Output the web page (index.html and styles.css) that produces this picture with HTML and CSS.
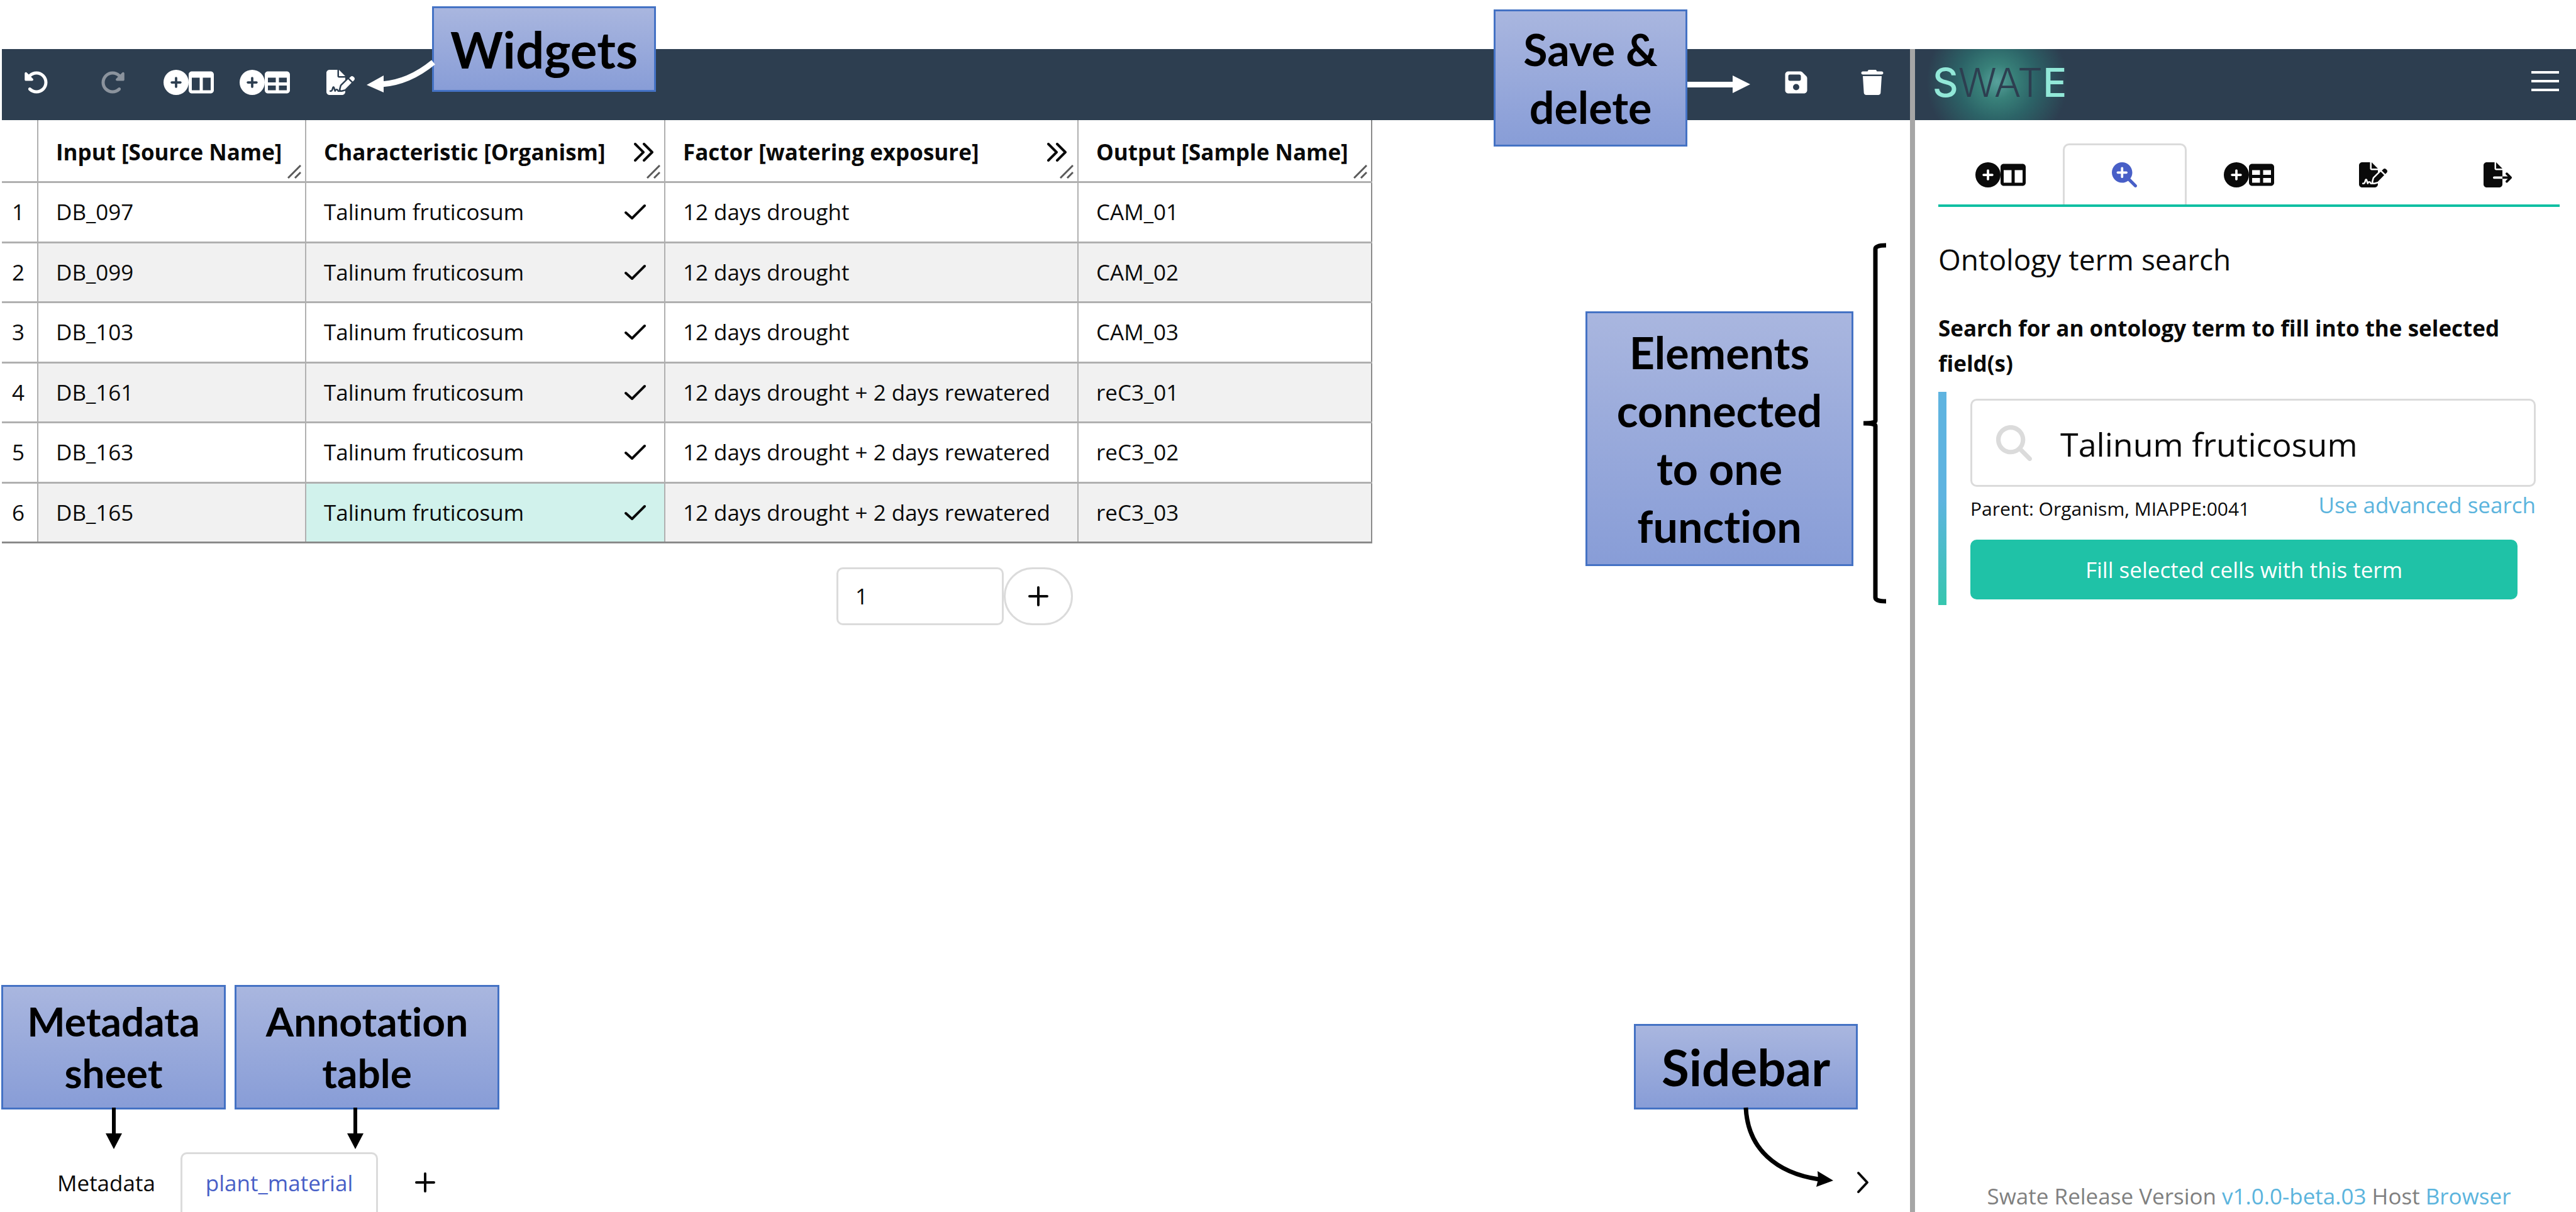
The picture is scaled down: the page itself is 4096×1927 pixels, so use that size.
FILE: index.html
```html
<!DOCTYPE html>
<html lang="en">
<head>
<meta charset="utf-8">
<title>Swate</title>
<link rel="stylesheet" href="styles.css">
</head>
<body>
<svg class="sprite" aria-hidden="true">
  <symbol id="i-undo" viewBox="0 0 512 512"><path d="M48.5 224H40c-13.3 0-24-10.7-24-24V72c0-9.7 5.8-18.5 14.8-22.2s19.3-1.7 26.2 5.2L98.6 96.6c87.6-86.5 228.7-86.2 315.8 1c87.5 87.5 87.5 229.3 0 316.8s-229.3 87.5-316.8 0c-12.5-12.5-12.5-32.8 0-45.3s32.8-12.5 45.3 0c62.5 62.5 163.8 62.5 226.3 0s62.5-163.8 0-226.3c-62.2-62.2-162.7-62.5-225.3-1L185 183c6.9 6.9 8.9 17.2 5.2 26.2s-12.5 14.8-22.2 14.8H48.5z"/></symbol>
  <symbol id="i-circle-plus" viewBox="0 0 512 512"><path d="M256 512A256 256 0 1 0 256 0a256 256 0 1 0 0 512zM232 344V280H168c-13.3 0-24-10.7-24-24s10.7-24 24-24h64V168c0-13.3 10.7-24 24-24s24 10.7 24 24v64h64c13.3 0 24 10.7 24 24s-10.7 24-24 24H280v64c0 13.3-10.7 24-24 24s-24-10.7-24-24z"/></symbol>
  <symbol id="i-columns" viewBox="0 0 512 512"><path d="M0 96C0 60.7 28.7 32 64 32H448c35.3 0 64 28.7 64 64V416c0 35.3-28.7 64-64 64H64c-35.3 0-64-28.7-64-64V96zm64 64V416H224V160H64zm384 0H288V416H448V160z"/></symbol>
  <symbol id="i-table" viewBox="0 0 512 512"><path d="M64 256V160H224v96H64zm0 64H224v96H64V320zm224 96V320H448v96H288zM448 256H288V160H448v96zM64 32C28.7 32 0 60.7 0 96V416c0 35.3 28.7 64 64 64H448c35.3 0 64-28.7 64-64V96c0-35.3-28.7-64-64-64H64z"/></symbol>
  <symbol id="i-sign" viewBox="0 0 576 512"><path d="M64 0C28.7 0 0 28.7 0 64V448c0 35.3 28.7 64 64 64H320c35.3 0 64-28.7 64-64V428.7c-2.7 1.1-5.4 2-8.2 2.7l-60.1 15c-3 .7-6 1.2-9 1.4c-.9 .1-1.8 .2-2.7 .2H240c-6.1 0-11.6-3.4-14.3-8.8l-8.8-17.7c-1.7-3.4-5.1-5.5-8.8-5.5s-7.2 2.1-8.8 5.5l-8.8 17.7c-2.9 5.9-9.2 9.4-15.7 8.8s-12.1-5.1-13.9-11.3L144 381l-9.8 32.8c-6.1 20.3-24.8 34.2-46 34.2H80c-8.8 0-16-7.2-16-16s7.2-16 16-16h8.2c7.1 0 13.3-4.6 15.3-11.4l14.9-49.5c3.4-11.3 13.8-19.1 25.6-19.1s22.2 7.7 25.6 19.1l11.6 38.6c7.4-6.2 16.8-9.7 26.8-9.7c15.9 0 30.4 9 37.5 23.2l4.4 8.8h8.9c-3.1-8.8-3.7-18.4-1.4-27.8l15-60.1c2.8-11.3 8.6-21.5 16.8-29.7L384 203.6V160H256c-17.7 0-32-14.3-32-32V0H64zM256 0V128H384L256 0zM549.8 139.7c-15.6-15.6-40.9-15.6-56.6 0l-29.4 29.4 71 71 29.4-29.4c15.6-15.6 15.6-40.9 0-56.6l-14.4-14.4zM311.9 321c-4.1 4.1-7 9.2-8.4 14.9l-15 60.1c-1.4 5.5 .2 11.2 4.2 15.2s9.7 5.6 15.2 4.2l60.1-15c5.6-1.4 10.8-4.3 14.9-8.4L512.1 262.7l-71-71L311.9 321z"/></symbol>
  <symbol id="i-export" viewBox="0 0 576 512"><path d="M0 64C0 28.7 28.7 0 64 0H224V128c0 17.7 14.3 32 32 32H384V288H216c-13.3 0-24 10.7-24 24s10.7 24 24 24H384V448c0 35.3-28.7 64-64 64H64c-35.3 0-64-28.7-64-64V64zM384 336V288H494.1l-39-39c-9.4-9.4-9.4-24.6 0-33.9s24.6-9.4 33.9 0l80 80c9.4 9.4 9.4 24.6 0 33.9l-80 80c-9.4 9.4-24.6 9.4-33.9 0s-9.4-24.6 0-33.9l39-39H384zm0-208H256V0L384 128z"/></symbol>
  <symbol id="i-zoom" viewBox="0 0 512 512"><path d="M416 208c0 45.9-14.9 88.3-40 122.7L502.6 457.4c12.5 12.5 12.5 32.8 0 45.3s-32.8 12.5-45.3 0L330.7 376c-34.4 25.2-76.8 40-122.7 40C93.1 416 0 322.9 0 208S93.1 0 208 0S416 93.1 416 208zM184 296c0 13.3 10.7 24 24 24s24-10.7 24-24V232h64c13.3 0 24-10.7 24-24s-10.7-24-24-24H232V120c0-13.3-10.7-24-24-24s-24 10.7-24 24v64H120c-13.3 0-24 10.7-24 24s10.7 24 24 24h64v64z"/></symbol>
  <symbol id="i-search" viewBox="0 0 512 512"><path d="M416 208c0 45.9-14.9 88.3-40 122.7L502.6 457.4c12.5 12.5 12.5 32.8 0 45.3s-32.8 12.5-45.3 0L330.7 376c-34.4 25.2-76.8 40-122.7 40C93.1 416 0 322.9 0 208S93.1 0 208 0S416 93.1 416 208zM208 352a144 144 0 1 0 0-288 144 144 0 1 0 0 288z"/></symbol>
  <symbol id="i-save" viewBox="0 0 448 512"><path d="M64 32C28.7 32 0 60.7 0 96V416c0 35.3 28.7 64 64 64H384c35.3 0 64-28.7 64-64V173.3c0-17-6.7-33.3-18.7-45.3L352 50.7C340 38.7 323.7 32 306.7 32H64zm0 96c0-17.7 14.3-32 32-32H288c17.7 0 32 14.3 32 32v64c0 17.7-14.3 32-32 32H96c-17.7 0-32-14.3-32-32V128zM224 288a64 64 0 1 1 0 128 64 64 0 1 1 0-128z"/></symbol>
  <symbol id="i-trash" viewBox="0 0 448 512"><path d="M135.2 17.7L128 32H32C14.3 32 0 46.3 0 64S14.3 96 32 96H416c17.7 0 32-14.3 32-32s-14.3-32-32-32H320l-7.2-14.3C307.4 6.8 296.3 0 284.2 0H163.8c-12.1 0-23.2 6.8-28.6 17.7zM416 128H32L53.2 467c1.6 25.3 22.6 45 47.9 45H346.9c25.3 0 46.3-19.7 47.9-45L416 128z"/></symbol>
  <symbol id="i-plus" viewBox="0 0 32 32"><path d="M16 2v28M2 16h28" fill="none" stroke="currentColor" stroke-width="4" stroke-linecap="round"/></symbol>
  <symbol id="i-check" viewBox="0 0 34 26"><path d="M2 14l10 9L32 3" fill="none" stroke="currentColor" stroke-width="4" stroke-linecap="round" stroke-linejoin="round"/></symbol>
  <symbol id="i-more" viewBox="0 0 32 30"><path d="M2 2l13 13L2 28M16 2l13 13L16 28" fill="none" stroke="currentColor" stroke-width="4" stroke-linecap="round" stroke-linejoin="round"/></symbol>
  <symbol id="i-chevron" viewBox="0 0 20 36"><path d="M3 3l14 15L3 33" fill="none" stroke="currentColor" stroke-width="4" stroke-linecap="round" stroke-linejoin="round"/></symbol>
  <symbol id="i-grip" viewBox="0 0 22 22"><path d="M1 21L21 1M12 21l9-9" fill="none" stroke="#5a5a5a" stroke-width="3"/></symbol>
</svg>

<div class="app">
  <main class="workspace">
    <header class="bar toolbar">
      <button class="tool" aria-label="Undo"><svg class="icon"><use href="#i-undo"/></svg></button>
      <button class="tool" aria-label="Redo" disabled><svg class="icon flip"><use href="#i-undo"/></svg></button>
      <button class="tool" aria-label="Add building block"><svg class="icon"><use href="#i-circle-plus"/></svg><svg class="icon"><use href="#i-columns"/></svg></button>
      <button class="tool" aria-label="Add template"><svg class="icon"><use href="#i-circle-plus"/></svg><svg class="icon"><use href="#i-table"/></svg></button>
      <button class="tool" aria-label="File picker"><svg class="icon wide"><use href="#i-sign"/></svg></button>
      <span class="spacer"></span>
      <button class="tool" aria-label="Save"><svg class="icon"><use href="#i-save"/></svg></button>
      <button class="tool" aria-label="Delete"><svg class="icon"><use href="#i-trash"/></svg></button>
    </header>

    <table class="sheet">
      <colgroup><col class="c-num"><col class="c-in"><col class="c-char"><col class="c-factor"><col class="c-out"></colgroup>
      <thead>
        <tr>
          <th></th>
          <th><div class="cell">Input [Source Name]</div><svg class="grip"><use href="#i-grip"/></svg></th>
          <th><div class="cell">Characteristic [Organism]<svg class="more"><use href="#i-more"/></svg></div><svg class="grip"><use href="#i-grip"/></svg></th>
          <th><div class="cell">Factor [watering exposure]<svg class="more"><use href="#i-more"/></svg></div><svg class="grip"><use href="#i-grip"/></svg></th>
          <th><div class="cell">Output [Sample Name]</div><svg class="grip"><use href="#i-grip"/></svg></th>
        </tr>
      </thead>
      <tbody>
        <tr><th>1</th><td>DB_097</td><td><div class="cell">Talinum fruticosum<svg class="check"><use href="#i-check"/></svg></div></td><td>12 days drought</td><td>CAM_01</td></tr>
        <tr><th>2</th><td>DB_099</td><td><div class="cell">Talinum fruticosum<svg class="check"><use href="#i-check"/></svg></div></td><td>12 days drought</td><td>CAM_02</td></tr>
        <tr><th>3</th><td>DB_103</td><td><div class="cell">Talinum fruticosum<svg class="check"><use href="#i-check"/></svg></div></td><td>12 days drought</td><td>CAM_03</td></tr>
        <tr><th>4</th><td>DB_161</td><td><div class="cell">Talinum fruticosum<svg class="check"><use href="#i-check"/></svg></div></td><td>12 days drought + 2 days rewatered</td><td>reC3_01</td></tr>
        <tr><th>5</th><td>DB_163</td><td><div class="cell">Talinum fruticosum<svg class="check"><use href="#i-check"/></svg></div></td><td>12 days drought + 2 days rewatered</td><td>reC3_02</td></tr>
        <tr><th>6</th><td>DB_165</td><td class="selected"><div class="cell">Talinum fruticosum<svg class="check"><use href="#i-check"/></svg></div></td><td>12 days drought + 2 days rewatered</td><td>reC3_03</td></tr>
      </tbody>
    </table>

    <div class="add-rows">
      <input class="count" type="text" inputmode="numeric" value="1" aria-label="Number of rows">
      <button class="add" aria-label="Add rows"><svg class="plus"><use href="#i-plus"/></svg></button>
    </div>

    <footer class="sheet-tabs">
      <button class="sheet-tab">Metadata</button>
      <button class="sheet-tab active">plant_material</button>
      <button class="new-tab" aria-label="New table"><svg class="plus"><use href="#i-plus"/></svg></button>
      <span class="spacer"></span>
      <button class="toggle" aria-label="Toggle sidebar"><svg class="chevron"><use href="#i-chevron"/></svg></button>
    </footer>
  </main>

  <div class="divider"></div>

  <aside class="sidebar">
    <header class="bar">
      <div class="logo"><b>S</b>WAT<b>E</b></div>
      <span class="spacer"></span>
      <button class="burger" aria-label="Menu"><i></i><i></i><i></i></button>
    </header>
    <div class="side-body">
      <nav class="side-tabs">
        <button class="side-tab" aria-label="Building blocks"><svg class="icon"><use href="#i-circle-plus"/></svg><svg class="icon"><use href="#i-columns"/></svg></button>
        <button class="side-tab active" aria-label="Term search"><svg class="icon"><use href="#i-zoom"/></svg></button>
        <button class="side-tab" aria-label="Templates"><svg class="icon"><use href="#i-circle-plus"/></svg><svg class="icon"><use href="#i-table"/></svg></button>
        <button class="side-tab" aria-label="File picker"><svg class="icon wide"><use href="#i-sign"/></svg></button>
        <button class="side-tab" aria-label="Export"><svg class="icon wide"><use href="#i-export"/></svg></button>
      </nav>
      <h1 class="title">Ontology term search</h1>
      <label class="subtitle" for="term">Search for an ontology term to fill into the selected field(s)</label>
      <section class="panel">
        <div class="search">
          <svg class="search-icon"><use href="#i-search"/></svg>
          <input id="term" class="search-input" type="text" value="Talinum fruticosum">
        </div>
        <div class="hints">
          <span class="parent">Parent: Organism, MIAPPE:0041</span>
          <a class="link" href="#">Use advanced search</a>
        </div>
        <button class="fill">Fill selected cells with this term</button>
      </section>
      <p class="version">Swate Release Version <a class="link" href="#">v1.0.0-beta.03</a> Host <a class="link" href="#">Browser</a></p>
    </div>
  </aside>
</div>

<div class="note note-widgets">Widgets
  <svg class="arrow" width="110" height="50" viewBox="0 0 110 50"><path d="M24 32Q67 29 106 -3" fill="none" stroke="#fff" stroke-width="9"/><path d="M0 33L27 18V45Z" fill="#fff"/></svg>
</div>
<div class="note note-save">Save &amp;<br>delete
  <svg class="arrow" width="100" height="28" viewBox="0 0 100 28"><path d="M0 10H72V0L100 14L72 28V19H0Z" fill="#fff"/></svg>
</div>
<div class="note note-elements">Elements<br>connected<br>to one<br>function
  <svg class="arrow" width="40" height="574" viewBox="0 0 40 574"><path d="M37 4Q20 4 20 10V283Q20 287 1 287Q20 287 20 291V564Q20 570 37 570" fill="none" stroke="#000" stroke-width="7"/></svg>
</div>
<div class="note note-metadata">Metadata<br>sheet
  <svg class="arrow" width="26" height="66" viewBox="0 0 26 66"><path d="M10 0H16V41H26L13 66L0 41H10Z"/></svg>
</div>
<div class="note note-annotation">Annotation<br>table
  <svg class="arrow" width="26" height="66" viewBox="0 0 26 66"><path d="M10 0H16V41H26L13 66L0 41H10Z"/></svg>
</div>
<div class="note note-sidebar">Sidebar
  <svg class="arrow" width="150" height="130" viewBox="0 0 150 130"><path d="M7 0C10 66 56 104 123 114" fill="none" stroke="#000" stroke-width="7"/><path d="M121 101L146 116L119 126L122 114Z"/></svg>
</div>
</body>
</html>
```
FILE: styles.css
```css
* { box-sizing: border-box; }

body {
  margin: 0;
  position: relative;
  min-height: 100vh;
  background: #fff;
  color: #0a0a0a;
  font: 35px/50px "Open Sans", "Noto Sans", sans-serif;
}

button, input {
  font: inherit;
  color: inherit;
  background: none;
  border: 0;
  margin: 0;
  padding: 0;
}

.sprite { position: absolute; width: 0; height: 0; }
.spacer { flex: 1; }
.link { color: #5bb4dd; text-decoration: none; }

.app {
  display: grid;
  grid-template-columns: 3034fr 8px 1051fr;
  min-height: 100vh;
  padding: 78px 0 0 3px;
}

.divider { background: #a6a6a6; }

.workspace, .sidebar {
  display: flex;
  flex-direction: column;
  min-width: 0;
}

/* Dark bars */
.bar {
  display: flex;
  height: 113px;
  flex: none;
  background: #2d3e50;
  color: #fff;
}

.toolbar { gap: 12px; padding: 0 6px 8px 0; }

.tool {
  display: flex;
  align-items: center;
  justify-content: center;
  width: 109px;
}
.tool:disabled { color: #8b939d; }

.icon { width: 40px; height: 40px; fill: currentColor; }
.icon.wide { width: 45px; }
.icon.flip { transform: scaleX(-1); }

/* Annotation table */
.sheet {
  border-collapse: collapse;
  table-layout: fixed;
  width: 2178px;
  border-right: 2px solid #8a8a8a;
  border-bottom: 3px solid #8a8a8a;
}
.c-num { width: 57px; }
.c-in { width: 426px; }
.c-char { width: 571px; }
.c-factor { width: 657px; }
.c-out { width: 467px; }

.sheet th, .sheet td {
  position: relative;
  height: 96px;
  padding: 0 0 0 28px;
  border-left: 2px solid #b0b0b0;
  border-bottom: 3px solid #b0b0b0;
  text-align: left;
  white-space: nowrap;
}
.sheet tr:nth-child(even) > * { height: 95px; }
.sheet tr > :first-child {
  padding: 0 4px 0 0;
  border-left: 0;
  text-align: center;
  font-weight: 400;
}
.sheet thead th { height: 98px; padding-top: 6px; }
.sheet tbody tr:nth-child(even) td { background: #f1f1f1; }
.sheet tbody tr td.selected { background: #d1f2ec; }
.sheet tbody tr:last-child > * { border-bottom-color: #8a8a8a; }

.cell { display: flex; align-items: center; justify-content: space-between; }
.more { width: 32px; height: 30px; margin-right: 16px; }
.check { width: 34px; height: 26px; margin-right: 29px; }
.grip { position: absolute; right: 6px; bottom: 4px; width: 22px; height: 22px; }

.add-rows {
  display: flex;
  justify-content: center;
  margin-top: 38px;
  padding-right: 4px;
}
.count {
  width: 266px;
  height: 92px;
  padding: 0 27px;
  border: 3px solid #dbdbdb;
  border-radius: 10px;
}
.add {
  display: flex;
  align-items: center;
  justify-content: center;
  width: 110px;
  border: 3px solid #dbdbdb;
  border-radius: 46px;
}
.plus { width: 32px; height: 32px; }

/* Sheet tabs along the bottom */
.sheet-tabs {
  display: flex;
  height: 95px;
  margin-top: auto;
  padding-left: 48px;
}
.sheet-tab {
  padding: 0 37px;
  border: 3px solid transparent;
  border-bottom: 0;
  border-radius: 10px 10px 0 0;
}
.sheet-tab.active { border-color: #dbdbdb; color: #485fc7; }
.new-tab, .toggle {
  display: flex;
  align-items: center;
  justify-content: center;
  width: 150px;
}
.chevron { width: 20px; height: 36px; }

/* Sidebar */
.logo {
  padding: 0 20px 6px 28px;
  background: radial-gradient(circle 112px at 50% 46%, #58a19c, #388079 25%, #2c6367 55%, #2d3e50);
  color: #2d3e50;
  font: 300 63px/107px "Inter", "Liberation Sans", sans-serif;
}
.logo b { color: #92e8d8; font-weight: 500; }

.burger {
  display: flex;
  flex-direction: column;
  justify-content: center;
  gap: 10px;
  width: 44px;
  margin: 0 27px 12px 0;
}
.burger i { height: 4px; background: #fff; }

.side-body {
  display: flex;
  flex: 1;
  flex-direction: column;
  padding: 37px 26px 0 37px;
}
.side-tabs { display: flex; border-bottom: 4px solid #10bfa2; }
.side-tab {
  display: flex;
  flex: 1;
  align-items: center;
  justify-content: center;
  height: 97px;
  border: 3px solid transparent;
  border-bottom: 0;
  border-radius: 10px 10px 0 0;
}
.side-tab.active { border-color: #dbdbdb; color: #485fc7; }

.title { margin: 53px 0 52px; font-size: 46px; line-height: 60px; font-weight: 400; }
.subtitle { font-weight: 700; line-height: 56px; }

.panel {
  margin-top: 17px;
  padding: 11px 38px 9px;
  border-left: 13px solid;
  border-image: linear-gradient(#5fb4e0 50%, #36c6ae) 1;
}
.search {
  display: flex;
  align-items: center;
  gap: 45px;
  height: 140px;
  padding-left: 38px;
  border: 3px solid #dbdbdb;
  border-radius: 10px;
}
.search-icon { flex: none; width: 57px; height: 57px; fill: #dbdbdb; }
.search-input { flex: 1; min-width: 0; height: 100%; padding-top: 2px; font-size: 52px; }

.hints {
  display: flex;
  align-items: flex-start;
  justify-content: space-between;
  margin: 4px 0 26px;
}
.parent { padding-top: 8px; font-size: 30px; line-height: 46px; }

.fill {
  display: block;
  width: calc(100% - 29px);
  height: 95px;
  border-radius: 10px;
  background: #1fc2a7;
  color: #fff;
}

.version { margin: auto 0 0; color: #808080; text-align: center; }

/* Callouts over the interface */
.note {
  position: absolute;
  display: grid;
  place-content: center;
  border: 3px solid #4472c4;
  background: linear-gradient(#a9b6df, #889dd7);
  color: #000;
  font: 700 70px/92px "Lato", "Open Sans", sans-serif;
  font-variant-ligatures: none;
  text-align: center;
}
.arrow { position: absolute; overflow: visible; }

.note-widgets { left: 687px; top: 10px; width: 356px; height: 136px; font-size: 80px; }
.note-widgets .arrow { right: 100%; top: 89px; margin-right: -3px; }
.note-save { right: 1413px; top: 15px; width: 308px; height: 218px; }
.note-save .arrow { left: 100%; top: 102px; margin-left: 3px; }
.note-elements { right: 1149px; top: 495px; width: 426px; height: 405px; }
.note-elements .arrow { left: 100%; top: -112px; margin-left: 18px; }
.note-metadata { left: 2px; bottom: 163px; width: 357px; height: 198px; font-size: 64px; line-height: 82px; }
.note-annotation { left: 373px; bottom: 163px; width: 421px; height: 198px; font-size: 64px; line-height: 82px; }
.note-metadata .arrow { left: 50%; top: 100%; margin-left: -13px; }
.note-annotation .arrow { left: 176px; top: 100%; }
.note-sidebar { right: 1142px; bottom: 163px; width: 356px; height: 136px; font-size: 80px; }
.note-sidebar .arrow { left: 50%; top: 100%; margin-left: -7px; }
```
